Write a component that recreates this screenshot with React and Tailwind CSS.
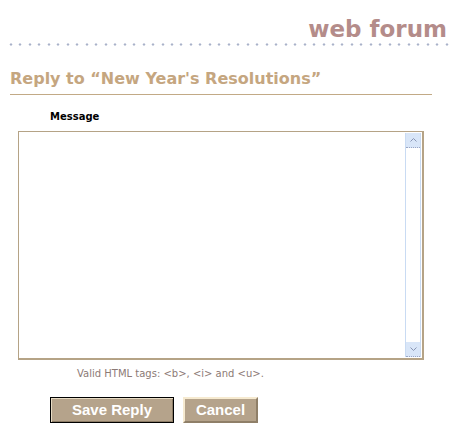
export default function App() {
  const dots = Array.from({ length: 47 }, (_, i) => 11 + i * 9.47);

  return (
    <div className="min-h-[442px] w-[456px] bg-white" style={{ fontFamily: '"DejaVu Sans", Verdana, sans-serif' }}>
      {/* Header */}
      <div className="flex justify-end pr-[9px] pt-[18px]">
        <span className="text-[23px] font-bold leading-[23px] text-[#b48c8a]">web forum</span>
      </div>
      <svg className="mt-[1px] block" width="456" height="5">
        {dots.map((x) => (
          <path key={x} d={`M${Math.round(x)} 1 L${Math.round(x) + 1.5} 2.5 L${Math.round(x)} 4 L${Math.round(x) - 1.5} 2.5 Z`} fill="#a9b2c9" />
        ))}
      </svg>

      {/* Title */}
      <div className="ml-[10px] mt-[24px] w-[422px] border-b border-[#c2aa86] pb-[7px]">
        <h1 className="text-[16px] font-bold leading-[16px] text-[#c5a680]">Reply to “New Year's Resolutions”</h1>
      </div>

      {/* Form */}
      <div className="ml-[50px] mt-[17px] text-[10px] font-bold leading-[10px] text-black">Message</div>
      <div className="ml-[18px] mt-[9px] flex h-[229px] w-[406px] border-b-2 border-l border-r-2 border-t border-[#b5a386] bg-white">
        <div className="flex-1" />
        <div className="my-[1px] mr-[1px] flex w-[16px] flex-col border-x border-[#c9dbf3]">
          <div className="flex h-[15px] items-center justify-center border-b border-dotted border-[#9aa6c4] bg-[#d9e6f8]">
            <svg width="7" height="4" viewBox="0 0 7 4">
              <path d="M0.5 3.5 L3.5 0.5 L6.5 3.5" fill="none" stroke="#8a96b4" strokeWidth="1" />
            </svg>
          </div>
          <div className="flex-1" />
          <div className="flex h-[15px] items-center justify-center border-b border-dotted border-[#9aa6c4] bg-[#d9e6f8]">
            <svg width="7" height="4" viewBox="0 0 7 4">
              <path d="M0.5 0.5 L3.5 3.5 L6.5 0.5" fill="none" stroke="#8a96b4" strokeWidth="1" />
            </svg>
          </div>
        </div>
      </div>

      <p className="ml-[77px] mt-[9px] text-[10px] leading-[10px] text-[#8c7a76]">
        Valid HTML tags: &lt;b&gt;, &lt;i&gt; and &lt;u&gt;.
      </p>

      <div className="ml-[50px] mt-[18px] flex gap-[9px]" style={{ fontFamily: '"Liberation Sans", Arial, sans-serif' }}>
        <button className="h-[26px] w-[124px] border border-black bg-[#b5a38b] text-[15px] font-bold text-white shadow-[inset_1px_1px_0_#e8dcc4,inset_-1px_-1px_0_#8c7c66]">
          Save Reply
        </button>
        <button className="h-[26px] w-[75px] border-2 border-b-[#8f7f68] border-l-[#f6ead0] border-r-[#8f7f68] border-t-[#f6ead0] bg-[#b5a38b] text-[15px] font-bold text-white">
          Cancel
        </button>
      </div>
    </div>
  );
}
